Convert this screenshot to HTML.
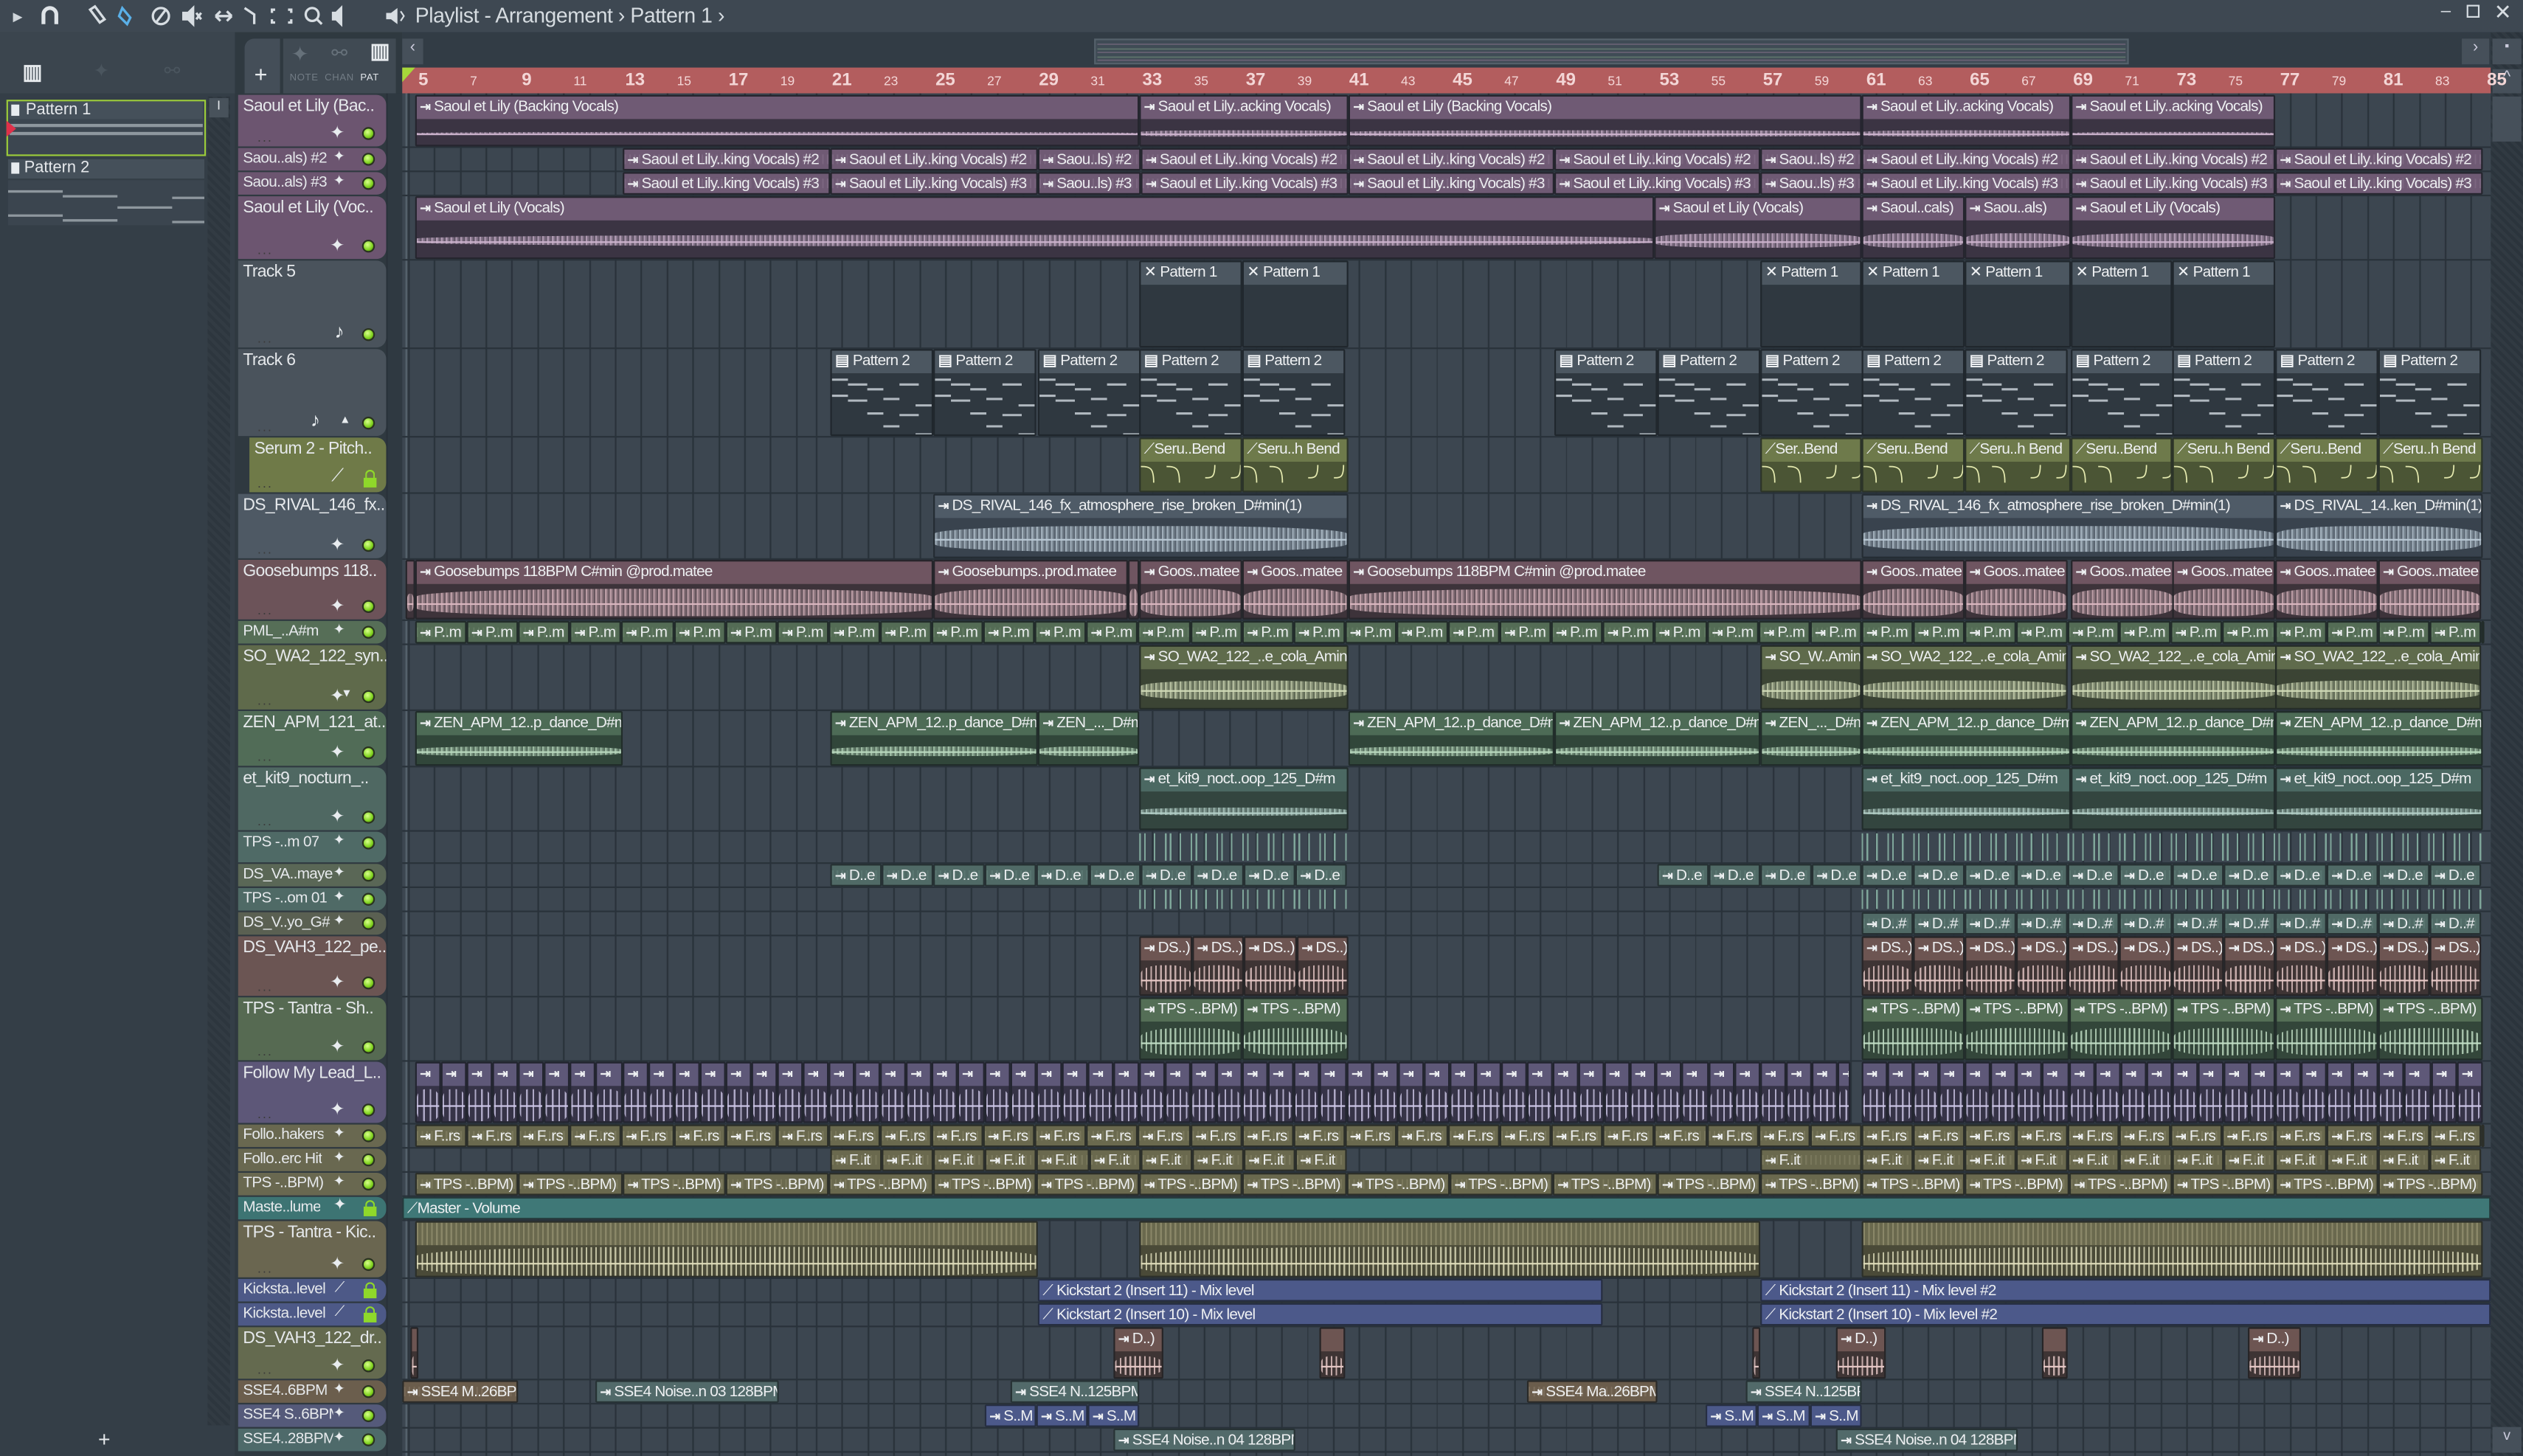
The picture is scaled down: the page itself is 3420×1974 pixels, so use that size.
<!DOCTYPE html>
<html><head><meta charset="utf-8">
<style>
html,body{margin:0;padding:0;background:#3a444e;overflow:hidden;width:3420px;height:1974px}
#w{position:absolute;left:0;top:0;width:1568px;height:905px;transform:scale(2.18112);transform-origin:0 0;background:#3a444e;font-family:"Liberation Sans Narrow","Liberation Sans",sans-serif;color:#e6e9ec;overflow:hidden}
.a{position:absolute;box-sizing:border-box}
.grid{background-color:#3c4650;background-image:repeating-linear-gradient(90deg,#29323a 0 1px,transparent 1px 16.07px);background-position:257px 0}
.hd{border-radius:0 6px 6px 0;font-size:10.5px;padding:1px 0 0 3px;white-space:nowrap;overflow:hidden;letter-spacing:-0.3px}
.hd span{display:inline-block;overflow:hidden;white-space:nowrap;vertical-align:top}
.clip{overflow:hidden;border:1px solid rgba(20,25,30,.55);border-radius:1px}
.ch{position:absolute;left:0;right:0;top:0;font-size:9.5px;letter-spacing:-0.35px;white-space:nowrap;overflow:hidden;padding-left:2px;line-height:13px}
.wv{position:absolute;left:0;right:0}
.led{position:absolute;width:8px;height:8px;border-radius:50%;background:radial-gradient(circle at 40% 35%,#d8ff8a,#7fd21e 60%,#3d6a0c);border:1px solid #2a3320}
.ic{position:absolute;font-size:10px;color:#e8ecef}
.dots{position:absolute;font-size:8px;color:#3a3a3a;letter-spacing:1px}
</style></head><body><div id="w">
<div class="a" style="left:0;top:0;width:1568px;height:20px;background:#3e4852"></div>
<div class="a" style="left:8px;top:3px;font-size:12px;color:#cfd5da">▸</div>
<svg class="a" style="left:24px;top:3px" width="14" height="14" viewBox="0 0 14 14"><path d="M3 12V6a4 4 0 0 1 8 0v6" stroke="#dfe4e8" stroke-width="2.4" fill="none"/></svg>
<svg class="a" style="left:54px;top:3px" width="160" height="14" viewBox="0 0 160 14" fill="none" stroke="#d7dde2" stroke-width="1.5">
<path d="M2 3l6 8 3-2-6-8z"/><path d="M22 2l5 6-2 4-5-5z" stroke="#5ab0e8"/><circle cx="46" cy="7" r="5"/><path d="M43 11l6-8"/>
<path d="M60 5h3l3-3v10l-3-3h-3z" fill="#d7dde2"/><path d="M68 5l3 4M71 5l-3 4"/><path d="M80 7h10M80 7l3-3M80 7l3 3M90 7l-3-3M90 7l-3 3"/>
<path d="M98 2l6 4v6"/><path d="M117 3h-2v2M125 3h2v2M117 11h-2v-2M125 11h2v-2"/><circle cx="140" cy="6" r="4"/><path d="M143 9l3 3"/>
<path d="M153 5h2l3-3v10l-3-3h-2z" fill="#d7dde2"/></svg>
<svg class="a" style="left:238px;top:3px" width="16" height="14"><path d="M2 5h3l4-3v10l-4-3H2z" fill="#d7dde2"/><path d="M11 4l2 3-2 3" stroke="#d7dde2" fill="none"/></svg>
<div class="a" style="left:258px;top:2px;font-size:13px;color:#d6dce1;white-space:nowrap;letter-spacing:-0.2px">Playlist - Arrangement › Pattern 1 ›</div>
<div class="a" style="left:1517px;top:1px;font-size:11px;color:#d7dde2">–</div>
<div class="a" style="left:1533px;top:3px;width:8px;height:8px;border:1px solid #d7dde2"></div>
<div class="a" style="left:1550px;top:0px;font-size:13px;color:#d7dde2">✕</div>
<div class="a" style="left:0;top:20px;width:146px;height:885px;background:#343e47"></div>
<div class="a" style="left:0;top:20px;width:146px;height:38px;background:#3b454e"></div>
<div class="a" style="left:14px;top:37px;font-size:13px;color:#e8ecef;font-weight:bold">▥</div>
<div class="a" style="left:58px;top:37px;font-size:12px;color:#4a555e">✦</div>
<div class="a" style="left:102px;top:37px;font-size:12px;color:#4a555e">⚯</div>
<div class="a" style="left:4px;top:62px;width:124px;height:35px;border:1.5px solid #9ccc3a;background:#3c4650"></div>
<div class="a" style="left:6px;top:63px;width:120px;height:11px;background:#45505a;font-size:10px;padding-left:10px">Pattern 1</div>
<div class="a" style="left:7px;top:65px;width:5px;height:7px;background:#e8ecef"></div>
<div class="a" style="left:6px;top:77px;width:120px;height:1.5px;background:#8e979e"></div>
<div class="a" style="left:6px;top:82px;width:120px;height:1.5px;background:#8e979e"></div>
<div class="a" style="left:4px;top:75px;width:0;height:0;border-left:6px solid #e0304a;border-top:5px solid transparent;border-bottom:5px solid transparent"></div>
<div class="a" style="left:5px;top:99px;width:122px;height:12px;background:#45505a;font-size:10px;padding-left:10px">Pattern 2</div>
<div class="a" style="left:7px;top:101px;width:5px;height:7px;background:#e8ecef"></div>
<div class="a" style="left:5px;top:112px;width:122px;height:28px;background:#3b454f"></div>
<svg class="a" style="left:5px;top:112px" width="122" height="28"><g stroke="#8e979e" stroke-width="1.5"><path d="M0 7h34M34 10h34M68 17h34M102 11h20M0 22h34M34 25h34M68 32h34M102 26h20"/></g></svg>
<div class="a" style="left:129px;top:60px;width:14px;height:826px;background:repeating-linear-gradient(45deg,#2d363e 0 2px,#323b43 2px 4px)"></div>
<div class="a" style="left:130px;top:61px;width:12px;height:12px;background:#48525b;font-size:8px;text-align:center">I</div>
<div class="a" style="left:0;top:886px;width:146px;height:19px;background:#343e47"></div>
<div class="a" style="left:61px;top:887px;font-size:13px">+</div>
<div class="a" style="left:146px;top:20px;width:104px;height:38px;background:#2f3940"></div>
<div class="a" style="left:152px;top:24px;width:22px;height:34px;background:#444e58;border-radius:6px 0 0 0"></div>
<div class="a" style="left:158px;top:38px;font-size:14px;color:#e8ecef">+</div>
<div class="a" style="left:176px;top:24px;width:70px;height:34px;background:#404a53"></div>
<div class="a" style="left:181px;top:26px;font-size:13px;color:#66717a">✦</div>
<div class="a" style="left:206px;top:26px;font-size:12px;color:#66717a">⚯</div>
<div class="a" style="left:230px;top:24px;font-size:13px;color:#e8ecef;font-weight:bold">▥</div>
<div class="a" style="left:180px;top:46px;font-size:6px;color:#727c85;letter-spacing:.3px;white-space:nowrap">NOTE&nbsp;&nbsp;CHAN&nbsp;&nbsp;<span style="color:#e0e4e8">PAT</span></div>
<div class="a" style="left:250px;top:20px;width:1298px;height:22px;background:#323c45"></div>
<div class="a" style="left:250px;top:24px;width:13px;height:16px;background:#46505a;font-size:10px;text-align:center;color:#ccd">‹</div>
<div class="a" style="left:680px;top:24px;width:643px;height:16px;background:#3f4b55;border:1px solid #55616b"></div>
<div class="a" style="left:682px;top:27px;width:639px;height:11px;background:repeating-linear-gradient(180deg,#7a6a80 0 1px,transparent 1px 3px,#6f8a78 3px 4px,transparent 4px 5px);opacity:.6"></div>
<div class="a" style="left:1530px;top:24px;width:17px;height:16px;background:#46505a;font-size:10px;text-align:center;color:#ccd">›</div>
<div class="a" style="left:250px;top:42px;width:1298px;height:16px;background:#b35d5e"></div>
<div class="a" style="left:250px;top:42px;width:0;height:0;border-left:8px solid #a6d83a;border-bottom:9px solid transparent"></div>
<div class="a" style="left:146px;top:58px;width:104px;height:847px;background:#2f3940"></div>
<div class="a" style="left:240px;top:58px;width:10px;height:847px;background:#2f3941;border-left:1px solid #29323a"></div>
<div class="a grid" style="left:250px;top:58px;width:1298px;height:847px"></div>
<div class="a" style="left:252px;top:58px;width:1px;height:847px;background:#56646e"></div>
<div class="a" style="left:1548px;top:20px;width:20px;height:885px;background:repeating-linear-gradient(45deg,#2b343c 0 2px,#313a42 2px 4px)"></div>
<div class="a" style="left:1549px;top:24px;width:18px;height:16px;background:#46505a;font-size:8px;text-align:center;color:#ccd">▪</div>
<div class="a" style="left:1549px;top:43px;width:18px;height:15px;background:#46505a;font-size:10px;text-align:center;color:#ccd">^</div>
<div class="a" style="left:1549px;top:60px;width:18px;height:28px;background:#46505a"></div>
<div class="a" style="left:1549px;top:887px;width:18px;height:16px;background:#46505a;font-size:9px;text-align:center;color:#ccd">v</div>
<div id="L"></div>
</div>
<script>
const L=document.getElementById('L');
function el(s,t,h){const d=document.createElement('div');d.className='a '+(s||'');d.setAttribute('style',t);if(h!==undefined)d.innerHTML=h;L.appendChild(d);return d;}
for(let n=5;n<=85;n+=2){const x=257+(n-5)*16.07;const big=((n-5)%4===0);el('', `left:${x+3}px;top:${big?44:46}px;font-size:${big?11:8}px;color:#f3d6d6;font-weight:${big?'bold':'normal'}`, n);}
const P={
 pu:['#6f5a74','#3b3443','#cbb2cc'], gr:['#4c5761','#2f3840','#aab4bc'], ol:['#6e7a4b','#4b5535','#e0e6a8'],
 rv:['#4f5b67','#39434e','#b9c8d4'], go:['#6f5561','#3d333a','#d9b6bf'], pm:['#546c55','#33433a','#a9c6a8'],
 so:['#5f6b4c','#3b4434','#cfd9b6'], ze:['#4d6b56','#31463a','#b8d8bd'], ki:['#4b6862','#33453f','#b4d0c8'],
 te:['#4b6a66','#3c4e4e','#8fb4aa'], dv:['#506a66','#3c4e4e','#9fc2b8'], re:['#6d5552','#3e3434','#e6c8c6'],
 ts:['#546e56','#33463a','#c0ddc4'], fo:['#5e5878','#363347','#ccc6e6'], kh:['#6a694e','#4a4a38','#dedcba'],
 ma:['#3f7877','#3a6362','#bfe'], bl:['#4c598a','#3d4870','#cfe'], br:['#6b5d4c','#463f36','#e0d2bc'], bn:['#526a6a','#3f5252','#cde']
};
const T=[
[59,33,'Saoul et Lily (Bac..','#6c5570',0,'w'],[92,15,'Saou..als) #2','#6c5570',1,'w'],[107,15,'Saou..als) #3','#6c5570',1,'w'],
[122,40,'Saoul et Lily (Voc..','#6c5570',0,'w'],[162,55,'Track 5','#4a535c',0,'n'],[217,55,'Track 6','#4a535c',0,'n6'],
[272,35,'Serum 2 - Pitch..','#6f7a48',0,'a'],[307,41,'DS_RIVAL_146_fx..','#4e5964',0,'w'],[348,38,'Goosebumps 118..','#6c5359',0,'w'],
[386,15,'PML_..A#m','#566e57',1,'w'],[401,41,'SO_WA2_122_syn..','#5f6a4b',0,'w2'],[442,35,'ZEN_APM_121_at..','#516c57',0,'w'],
[477,40,'et_kit9_nocturn_..','#4f6862',0,'w'],[517,20,'TPS -..m 07','#4f6a66',1,'w'],[537,15,'DS_VA..maye','#5a6756',1,'w'],
[552,15,'TPS -..om 01','#4f6a66',1,'w'],[567,15,'DS_V..yo_G#','#5a6052',1,'w'],[582,38,'DS_VAH3_122_pe..','#6b5553',0,'w'],
[620,40,'TPS - Tantra - Sh..','#566a52',0,'w'],[660,39,'Follow My Lead_L..','#5d5778',0,'w'],[699,15,'Follo..hakers','#696850',1,'w'],
[714,15,'Follo..erc Hit','#696850',1,'w'],[729,15,'TPS -..BPM)','#696850',1,'w'],[744,15,'Maste..lume','#3d7473',1,'l'],
[759,36,'TPS - Tantra - Kic..','#6a6650',0,'w'],[795,15,'Kicksta..level','#4d5987',1,'l2'],[810,15,'Kicksta..level','#4d5987',1,'l2'],
[825,33,'DS_VAH3_122_dr..','#646a4f',0,'w'],[858,15,'SSE4..6BPM','#6b5e4d',1,'w'],[873,15,'SSE4 S..6BPM','#555a7a',1,'w'],[888,15,'SSE4..28BPM','#4e6a6a',1,'w']];
T.forEach((t,i)=>{const[y,h,n,c,cp,ic]=t;
 el('', `left:250px;top:${y+h-1}px;width:1298px;height:1px;background:#29323a`);
 const sh = (i===6)? 'left:155px;width:85px;':'left:148px;width:92px;';
 const lw = cp?56:(i===6?82:89);
 el('hd', `${sh}top:${y}px;height:${h-1}px;background:${c};${cp?'font-size:9.5px;line-height:13px;padding-top:0':''}`, `<span style="max-width:${lw}px">${n}</span>`);
 const by = cp? y+2 : y+h-14;
 if(ic==='l'||ic==='l2'){ el('',`left:226px;top:${by+4}px;width:8px;height:6px;background:#8fd82a`); el('',`left:227px;top:${by}px;width:6px;height:6px;border:1.5px solid #8fd82a;border-bottom:none;border-radius:3px 3px 0 0`);
   el('ic', `left:${ic==='l'?207:208}px;top:${by-2}px;font-size:${ic==='l'?10:9}px`, ic==='l'?'✦':'⟋');}
 else if(ic==='a'){el('',`left:226px;top:${by+4}px;width:8px;height:6px;background:#8fd82a`);el('',`left:227px;top:${by-1}px;width:6px;height:6px;border:1.5px solid #8fd82a;border-bottom:none;border-radius:3px 3px 0 0`);el('ic',`left:206px;top:${by-3}px;font-size:11px`,'⟋');}
 else { el('led', `left:225px;top:${by+1}px`);
   if(ic==='n'||ic==='n6'){el('ic',`left:${ic==='n'?208:193}px;top:${by-4}px;font-size:12px`,'♪'); if(ic==='n6') el('ic',`left:211px;top:${by}px;font-size:7px`,'▲');}
   else el('ic', `left:${cp?207:205}px;top:${by-2}px;font-size:${cp?9:11}px`, '✦');
   if(ic==='w2') el('ic',`left:212px;top:${by}px;font-size:7px`,'▼');
 }
 if(!cp) el('dots', `left:160px;top:${y+h-11}px`, '...');
});
function clip(ti,x1,x2,label,p,opt){opt=opt||{};const[y,h]=T[ti];const c=P[p];const w=x2-x1;
 const d=el('clip', `left:${x1}px;top:${y}px;width:${w}px;height:${h-1}px;background:${c[1]}`);
 const hh = h<=21? h-1 : (opt.hh||14);
 const hdr=document.createElement('div');hdr.className='ch';hdr.style.cssText=`height:${hh}px;background:${c[0]};color:#eef0f2;${h<=21?'line-height:'+(hh)+'px':''}`;
 const icon = opt.ic!==undefined?opt.ic:'<b style="font-size:8px">⇥</b> ';
 hdr.innerHTML = icon+(label||'');
 d.appendChild(hdr);
 if(h>21 && !opt.nowave){const bh=h-1-hh;const wv=document.createElement('div');wv.className='wv';
  const amp = opt.amp||0.55; const ww=bh*amp;
  let bg;
  if(opt.kind==='spk') bg=`repeating-linear-gradient(90deg,${c[2]} 0 1px,transparent 1px ${opt.sp||4}px)`;
  else bg=`repeating-linear-gradient(90deg,${c[2]} 0 1px,${c[2]}99 1px 2px,${c[2]}55 2px 3px)`;
  wv.style.cssText=`top:${hh+(bh-ww)/2}px;height:${ww}px;background:${bg};opacity:.8;border-radius:40%/30%`;
  d.appendChild(wv);
  const ln=document.createElement('div');ln.className='wv';ln.style.cssText=`top:${hh+bh/2}px;height:1px;background:${c[2]}`;d.appendChild(ln);
 }
 if(h<=21 && opt.faint!==false){const f=document.createElement('div');f.className='wv';f.style.cssText=`top:3px;bottom:3px;background:repeating-linear-gradient(90deg,${c[2]}22 0 1px,transparent 1px 3px)`;d.appendChild(f);}
 return d;}
function rep(ti,x1,x2,step,label,p,opt){for(let x=x1;x<x2-1;x+=step)clip(ti,Math.round(x),Math.round(Math.min(x+step,x2)),label,p,opt);}
clip(0,258,708,'Saoul et Lily (Backing Vocals)','pu',{amp:.12});
clip(0,708,838,'Saoul et Lily..acking Vocals)','pu',{amp:.18});
clip(0,838,1157,'Saoul et Lily (Backing Vocals)','pu',{amp:.18});
clip(0,1157,1287,'Saoul et Lily..acking Vocals)','pu',{amp:.18});
clip(0,1287,1414,'Saoul et Lily..acking Vocals)','pu',{amp:.12});
[[1,'#2'],[2,'#3']].forEach(([t,s])=>{[[387,516],[516,645],[709,838],[838,966],[966,1094],[1157,1287],[1287,1414],[1414,1543]].forEach(([a,b])=>clip(t,a,b,'Saoul et Lily..king Vocals) '+s,'pu'));clip(t,645,709,'Saou..ls) '+s,'pu');clip(t,1094,1157,'Saou..ls) '+s,'pu');});
clip(3,258,1028,'Saoul et Lily (Vocals)','pu',{amp:.3});clip(3,1028,1157,'Saoul et Lily (Vocals)','pu',{amp:.35});
clip(3,1157,1221,'Saoul..cals)','pu',{amp:.35});clip(3,1221,1287,'Saou..als)','pu',{amp:.35});clip(3,1287,1414,'Saoul et Lily (Vocals)','pu',{amp:.35});
[[708,772],[772,838],[1094,1157],[1157,1221],[1221,1287],[1287,1350],[1350,1414]].forEach(([a,b])=>clip(4,a,b,'Pattern 1','gr',{nowave:1,ic:'✕ '}));
function pat2(a,b){const d=clip(5,a,b,'Pattern 2','gr',{nowave:1,ic:'<b>▤</b> '});const s=document.createElementNS('http://www.w3.org/2000/svg','svg');s.setAttribute('width',b-a);s.setAttribute('height',40);s.style.cssText='position:absolute;left:0;top:14px';s.innerHTML='<g stroke="#b0b8bf" stroke-width="1.4"><path d="M0 4h10M10 7h12M22 10h10M32 16h10M42 7h12M52 20h12M0 14h10M10 17h12M22 25h10M32 33h10M42 26h12M52 38h12"/></g>';d.appendChild(s);}
[516,580,645,708,772,966,1030,1094,1157,1221,1287,1350,1414,1478].forEach(a=>pat2(a,a+64));
function serum(a,b,l){const d=clip(6,a,b,l,'ol',{nowave:1,ic:'⟋'});const s=document.createElementNS('http://www.w3.org/2000/svg','svg');s.setAttribute('width',b-a);s.setAttribute('height',20);s.style.cssText='position:absolute;left:0;top:14px';s.innerHTML='<path d="M0 3c6 0 8 1 8 10M16 3c6 0 8 1 8 10M40 10c4 0 6 0 6-8M56 10c4 0 6 0 6-8" stroke="#e6ebb0" fill="none" stroke-width=".8"/>';d.appendChild(s);}
[[708,772,'Seru..Bend'],[772,838,'Seru..h Bend'],[1094,1157,'Ser..Bend'],[1157,1221,'Seru..Bend'],[1221,1287,'Seru..h Bend'],[1287,1350,'Seru..Bend'],[1350,1414,'Seru..h Bend'],[1414,1478,'Seru..Bend'],[1478,1543,'Seru..h Bend']].forEach(a=>serum(...a));
clip(7,580,838,'DS_RIVAL_146_fx_atmosphere_rise_broken_D#min(1)','rv',{amp:.6});
clip(7,1157,1414,'DS_RIVAL_146_fx_atmosphere_rise_broken_D#min(1)','rv',{amp:.6});
clip(7,1414,1543,'DS_RIVAL_14..ken_D#min(1)','rv',{amp:.6});
clip(8,252,258,'','go',{amp:.5,ic:''});
clip(8,258,580,'Goosebumps 118BPM C#min @prod.matee','go',{amp:.7});
clip(8,580,701,'Goosebumps..prod.matee','go',{amp:.7});clip(8,701,708,'','go',{amp:.7,ic:''});
clip(8,708,772,'Goos..matee','go',{amp:.7});clip(8,772,838,'Goos..matee','go',{amp:.7});
clip(8,838,1157,'Goosebumps 118BPM C#min @prod.matee','go',{amp:.7});
[1157,1221,1287,1350,1414,1478].forEach(a=>clip(8,a,a+64,'Goos..matee','go',{amp:.7}));
rep(9,258,1543,32.1,'P..m','pm');
clip(10,708,838,'SO_WA2_122_..e_cola_Amin','so',{amp:.45});clip(10,1094,1157,'SO_W..Amin','so',{amp:.45});
[1157,1287,1414].forEach(a=>clip(10,a,Math.min(a+128,1543),'SO_WA2_122_..e_cola_Amin','so',{amp:.45}));
[[258,387],[516,645],[838,966],[966,1094],[1157,1287],[1287,1414],[1414,1543]].forEach(([a,b])=>clip(11,a,b,'ZEN_APM_12..p_dance_D#m','ze',{amp:.3}));
clip(11,645,708,'ZEN_..._D#m','ze',{amp:.3});clip(11,1094,1157,'ZEN_..._D#m','ze',{amp:.3});
[[708,838],[1157,1287],[1287,1414],[1414,1543]].forEach(([a,b])=>clip(12,a,b,'et_kit9_noct..oop_125_D#m','ki',{amp:.2}));
function lines(ti,a,b,col){const[y,h]=T[ti];el('',`left:${a}px;top:${y+1}px;width:${b-a}px;height:${h-3}px;background:repeating-linear-gradient(90deg,${col} 0 1px,transparent 1px 3px,${col} 3px 4px,transparent 4px 9px,${col} 9px 10px,transparent 10px 16px)`);}
lines(13,708,838,'#7fa69a');lines(13,1157,1543,'#7fa69a');
rep(14,516,838,32.1,'D..e','dv');rep(14,1030,1157,32,'D..e','dv');rep(14,1157,1543,32.1,'D..e','dv');
lines(15,708,838,'#7fa69a');lines(15,1157,1543,'#7fa69a');
rep(16,1157,1543,32.1,'D..#','dv');
rep(17,708,838,32.5,'DS..)','re',{kind:'spk',amp:.75,sp:3});rep(17,1157,1543,32.1,'DS..)','re',{kind:'spk',amp:.75,sp:3});
clip(18,708,772,'TPS -..BPM)','ts',{kind:'spk',amp:.7,sp:3});clip(18,772,838,'TPS -..BPM)','ts',{kind:'spk',amp:.7,sp:3});
rep(18,1157,1543,64.3,'TPS -..BPM)','ts',{kind:'spk',amp:.7,sp:3});
rep(19,258,1150,16.07,'','fo',{kind:'spk',amp:.8,sp:4,ic:'<b style="font-size:8px">⇥</b>'});rep(19,1157,1543,16.07,'','fo',{kind:'spk',amp:.8,sp:4,ic:'<b style="font-size:8px">⇥</b>'});
rep(20,258,1543,32.1,'F..rs','kh');
rep(21,516,838,32.1,'F..it','kh');clip(21,1094,1157,'F..it','kh');rep(21,1157,1543,32.1,'F..it','kh');
rep(22,258,1157,64.3,'TPS -..BPM)','kh');rep(22,1157,1543,64.3,'TPS -..BPM)','kh');
clip(23,250,1548,'Master - Volume','ma',{ic:'⟋',faint:false});
[[258,645],[708,1094],[1157,1543]].forEach(([a,b])=>{const d=clip(24,a,b,'','kh',{kind:'spk',amp:.9,sp:3,ic:''});d.firstChild.style.background='repeating-linear-gradient(90deg,#8a8768 0 1px,#6a694e 1px 3px)';});
clip(25,645,996,'Kickstart 2 (Insert 11) - Mix level','bl',{ic:'⟋ ',faint:false});clip(25,1094,1548,'Kickstart 2 (Insert 11) - Mix level #2','bl',{ic:'⟋ ',faint:false});
clip(26,645,996,'Kickstart 2 (Insert 10) - Mix level','bl',{ic:'⟋ ',faint:false});clip(26,1094,1548,'Kickstart 2 (Insert 10) - Mix level #2','bl',{ic:'⟋ ',faint:false});
[[255,260,''],[692,723,'D..)'],[820,836,''],[1089,1094,''],[1141,1172,'D..)'],[1269,1285,''],[1397,1430,'D..)']].forEach(([a,b,l])=>clip(27,a,b,l,'re',{kind:'spk',amp:.7,sp:3,ic:l?undefined:''}));
clip(28,250,322,'SSE4 M..26BPM','br');clip(28,370,484,'SSE4 Noise..n 03 128BPM','bn');clip(28,628,708,'SSE4 N..125BPM','bn');
clip(28,949,1030,'SSE4 Ma..26BPM','br');clip(28,1085,1157,'SSE4 N..125BPM','bn');
rep(29,612,708,32,'S..M','bl');rep(29,1060,1157,32.3,'S..M','bl');
clip(30,692,805,'SSE4 Noise..n 04 128BPM','bn');clip(30,1141,1254,'SSE4 Noise..n 04 128BPM','bn');
</script>
</body></html>
